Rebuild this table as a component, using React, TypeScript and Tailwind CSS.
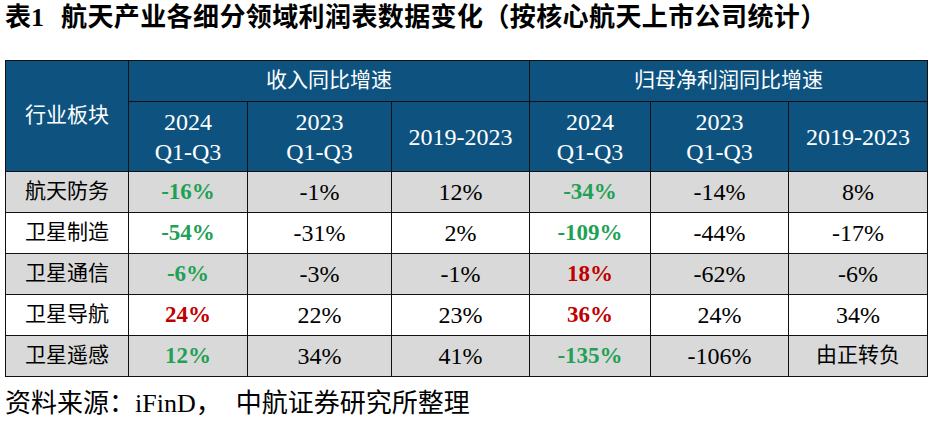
import React from "react";

type Cell = { v: string; tone?: "green" | "red" };

const rows: { name: string; cells: Cell[] }[] = [
  {
    name: "航天防务",
    cells: [{ v: "-16%", tone: "green" }, { v: "-1%" }, { v: "12%" }, { v: "-34%", tone: "green" }, { v: "-14%" }, { v: "8%" }],
  },
  {
    name: "卫星制造",
    cells: [{ v: "-54%", tone: "green" }, { v: "-31%" }, { v: "2%" }, { v: "-109%", tone: "green" }, { v: "-44%" }, { v: "-17%" }],
  },
  {
    name: "卫星通信",
    cells: [{ v: "-6%", tone: "green" }, { v: "-3%" }, { v: "-1%" }, { v: "18%", tone: "red" }, { v: "-62%" }, { v: "-6%" }],
  },
  {
    name: "卫星导航",
    cells: [{ v: "24%", tone: "red" }, { v: "22%" }, { v: "23%" }, { v: "36%", tone: "red" }, { v: "24%" }, { v: "34%" }],
  },
  {
    name: "卫星遥感",
    cells: [{ v: "12%", tone: "green" }, { v: "34%" }, { v: "41%" }, { v: "-135%", tone: "green" }, { v: "-106%" }, { v: "由正转负" }],
  },
];

const cellClass = (c: Cell) => {
  if (!/%/.test(c.v)) return "text-[21px] text-black";
  if (c.tone === "green") return "text-[23px] font-bold text-[#1fa155]";
  if (c.tone === "red") return "text-[23px] font-bold text-[#c00000]";
  return "text-[24px] text-black";
};

const HeadPeriod = ({ top, bottom }: { top: string; bottom?: string }) => (
  <th className="border border-[#111] font-normal text-[24px] leading-[30px] text-center align-middle">
    {top}
    {bottom && (
      <>
        <br />
        {bottom}
      </>
    )}
  </th>
);

export default function App() {
  return (
    <div className="w-[943px] h-[421px] bg-white overflow-hidden font-['Liberation_Serif','Noto_Sans_CJK_SC',serif] text-black">
      <div className="pl-[5px] pt-[2px] h-[34px] flex items-center text-[26px] leading-[30px] font-bold whitespace-nowrap">
        <span>表1</span>
        <span className="ml-[17px] tracking-[0.4px]">航天产业各细分领域利润表数据变化（按核心航天上市公司统计）</span>
      </div>

      <table className="mt-[26px] ml-[5px] w-[922px] table-fixed border-collapse">
        <colgroup>
          <col className="w-[123px]" />
          <col className="w-[119px]" />
          <col className="w-[144px]" />
          <col className="w-[138px]" />
          <col className="w-[121px]" />
          <col className="w-[138px]" />
          <col className="w-[139px]" />
        </colgroup>
        <thead className="bg-[#0e5380] text-white">
          <tr className="h-[41px]">
            <th rowSpan={2} className="border border-[#111] font-normal text-[21px] text-center align-middle">
              行业板块
            </th>
            <th colSpan={3} className="border border-[#111] font-normal text-[21px] text-center align-middle">
              收入同比增速
            </th>
            <th colSpan={3} className="border border-[#111] font-normal text-[21px] text-center align-middle">
              归母净利润同比增速
            </th>
          </tr>
          <tr className="h-[70px]">
            <HeadPeriod top="2024" bottom="Q1-Q3" />
            <HeadPeriod top="2023" bottom="Q1-Q3" />
            <HeadPeriod top="2019-2023" />
            <HeadPeriod top="2024" bottom="Q1-Q3" />
            <HeadPeriod top="2023" bottom="Q1-Q3" />
            <HeadPeriod top="2019-2023" />
          </tr>
        </thead>
        <tbody>
          {rows.map((row, i) => (
            <tr key={row.name} className={`h-[41px] ${i % 2 === 0 ? "bg-[#d9d9d9]" : "bg-white"}`}>
              <td className="border border-[#111] text-[21px] text-center align-middle">{row.name}</td>
              {row.cells.map((c, j) => (
                <td key={j} className={`border border-[#111] text-center align-middle ${cellClass(c)}`}>
                  {c.v}
                </td>
              ))}
            </tr>
          ))}
        </tbody>
      </table>

      <div className="pl-[5px] mt-[12px] text-[26px] leading-[30px] whitespace-nowrap">
        <span>资料来源：iFinD，</span>
        <span className="ml-[14px]">中航证券研究所整理</span>
      </div>
    </div>
  );
}
